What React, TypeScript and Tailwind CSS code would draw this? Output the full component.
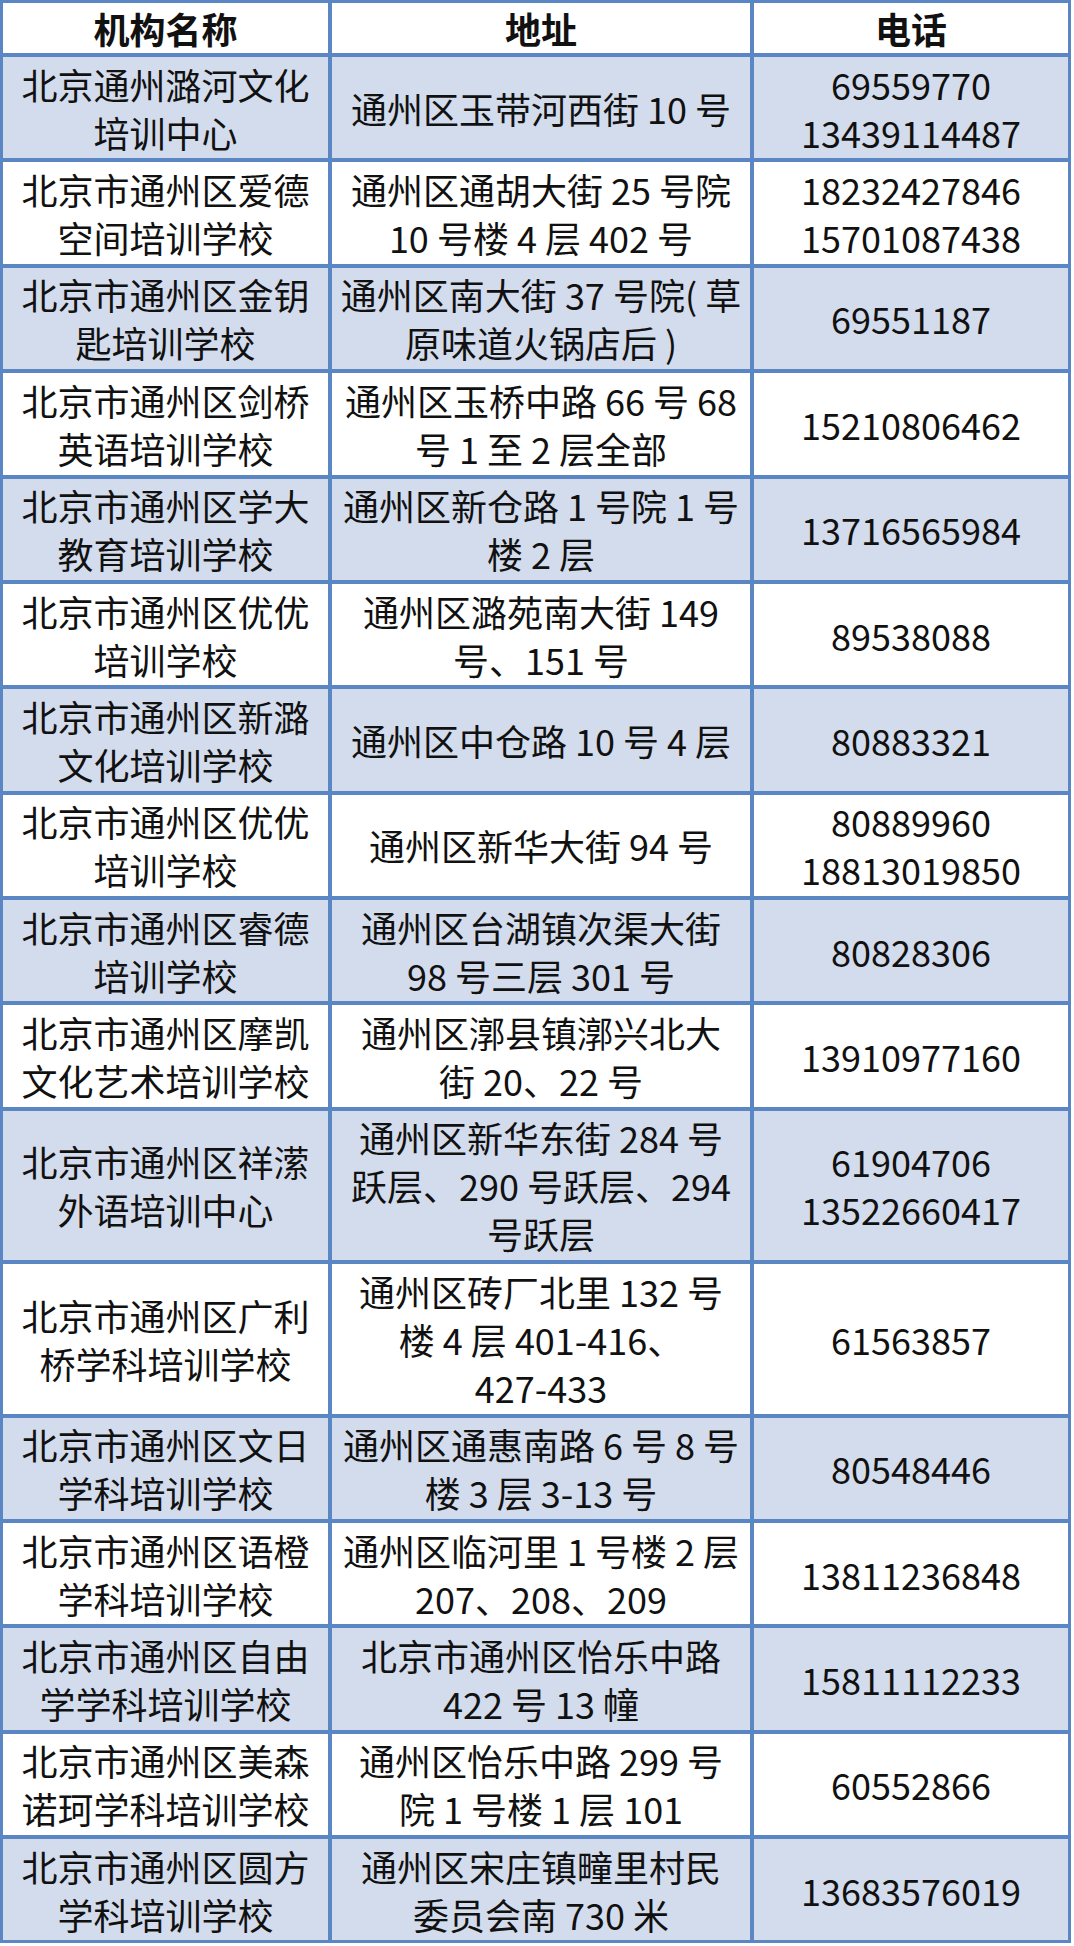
import React from "react";

type Row = { name: string[]; addr: string[]; tel: string[] };

const rows: Row[] = [
  { name: ["北京通州潞河文化", "培训中心"], addr: ["通州区玉带河西街 10 号"], tel: ["69559770", "13439114487"] },
  { name: ["北京市通州区爱德", "空间培训学校"], addr: ["通州区通胡大街 25 号院", "10 号楼 4 层 402 号"], tel: ["18232427846", "15701087438"] },
  { name: ["北京市通州区金钥", "匙培训学校"], addr: ["通州区南大街 37 号院( 草", "原味道火锅店后 )"], tel: ["69551187"] },
  { name: ["北京市通州区剑桥", "英语培训学校"], addr: ["通州区玉桥中路 66 号 68", "号 1 至 2 层全部"], tel: ["15210806462"] },
  { name: ["北京市通州区学大", "教育培训学校"], addr: ["通州区新仓路 1 号院 1 号", "楼 2 层"], tel: ["13716565984"] },
  { name: ["北京市通州区优优", "培训学校"], addr: ["通州区潞苑南大街 149", "号、151 号"], tel: ["89538088"] },
  { name: ["北京市通州区新潞", "文化培训学校"], addr: ["通州区中仓路 10 号 4 层"], tel: ["80883321"] },
  { name: ["北京市通州区优优", "培训学校"], addr: ["通州区新华大街 94 号"], tel: ["80889960", "18813019850"] },
  { name: ["北京市通州区睿德", "培训学校"], addr: ["通州区台湖镇次渠大街", "98 号三层 301 号"], tel: ["80828306"] },
  { name: ["北京市通州区摩凯", "文化艺术培训学校"], addr: ["通州区漷县镇漷兴北大", "街 20、22 号"], tel: ["13910977160"] },
  { name: ["北京市通州区祥潆", "外语培训中心"], addr: ["通州区新华东街 284 号", "跃层、290 号跃层、294", "号跃层"], tel: ["61904706", "13522660417"] },
  { name: ["北京市通州区广利", "桥学科培训学校"], addr: ["通州区砖厂北里 132 号", "楼 4 层 401-416、", "427-433"], tel: ["61563857"] },
  { name: ["北京市通州区文日", "学科培训学校"], addr: ["通州区通惠南路 6 号 8 号", "楼 3 层 3-13 号"], tel: ["80548446"] },
  { name: ["北京市通州区语橙", "学科培训学校"], addr: ["通州区临河里 1 号楼 2 层", "207、208、209"], tel: ["13811236848"] },
  { name: ["北京市通州区自由", "学学科培训学校"], addr: ["北京市通州区怡乐中路", "422 号 13 幢"], tel: ["15811112233"] },
  { name: ["北京市通州区美森", "诺珂学科培训学校"], addr: ["通州区怡乐中路 299 号", "院 1 号楼 1 层 101"], tel: ["60552866"] },
  { name: ["北京市通州区圆方", "学科培训学校"], addr: ["通州区宋庄镇疃里村民", "委员会南 730 米"], tel: ["13683576019"] },
];

function Cell({ lines, blue }: { lines: string[]; blue: boolean }) {
  return (
    <div
      className={`flex flex-col items-center justify-center py-[2.7px] text-center ${
        blue ? "bg-[#d3dcec]" : "bg-white"
      }`}
    >
      {lines.map((l, i) => (
        <div key={i} className="whitespace-nowrap leading-[48px]">
          {l}
        </div>
      ))}
    </div>
  );
}

export default function App() {
  return (
    <div
      className="w-[1074px] bg-white text-[36px] text-[#111111]"
      style={{ fontFamily: '"Noto Sans CJK SC", "Noto Sans", sans-serif' }}
    >
      <div className="grid w-[1071px] grid-cols-[325px_418px_314px] gap-[4px] bg-[#5a86c4] p-[3px]">
        <div className="flex h-[50px] items-center justify-center bg-white font-bold">机构名称</div>
        <div className="flex h-[50px] items-center justify-center bg-white font-bold">地址</div>
        <div className="flex h-[50px] items-center justify-center bg-white font-bold">电话</div>
        {rows.map((r, i) => {
          const blue = i % 2 === 0;
          return (
            <React.Fragment key={i}>
              <Cell lines={r.name} blue={blue} />
              <Cell lines={r.addr} blue={blue} />
              <Cell lines={r.tel} blue={blue} />
            </React.Fragment>
          );
        })}
      </div>
    </div>
  );
}
